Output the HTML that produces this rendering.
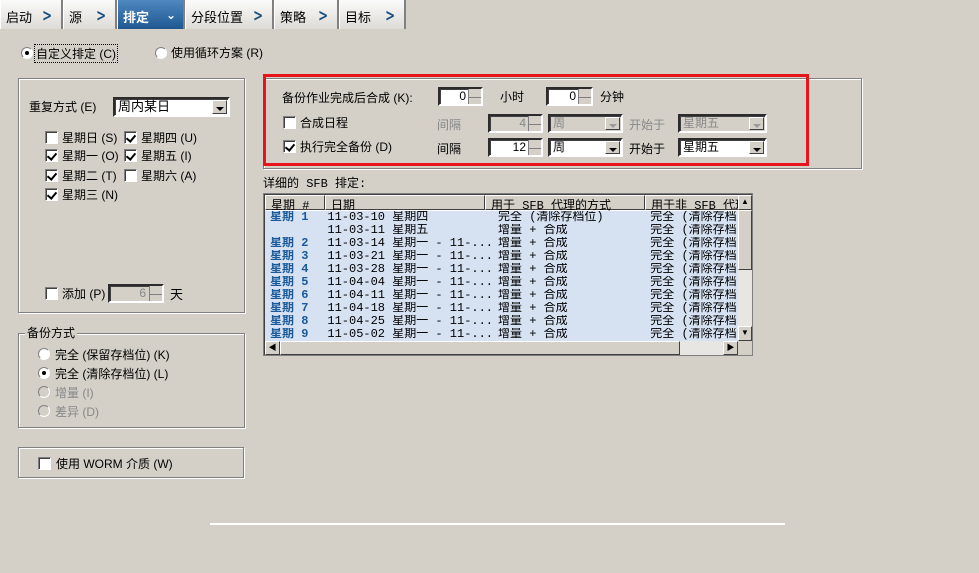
<!DOCTYPE html>
<html><head><meta charset="utf-8"><style>
*{box-sizing:border-box;margin:0;padding:0}
body{width:979px;height:573px;background:#d4d0c8;font-family:"Liberation Sans","Noto Sans CJK SC",sans-serif;font-size:12px;color:#000;position:relative;overflow:hidden}
.a{position:absolute;white-space:nowrap}
.tab{position:absolute;top:0;height:29px;background:linear-gradient(#fbfbfb,#dedbd6);border-right:2px solid #808080;border-left:1px solid #fff;font-size:13px;padding:7px 0 0 5px}
.tab .ar{position:absolute;right:7px;top:6px;color:#1a4f80;font-weight:bold;font-size:17px;font-family:"DejaVu Sans",sans-serif;transform:scaleX(0.7)}
.grp{position:absolute;border:1px solid #808080;box-shadow:1px 1px 0 #fff,inset 1px 1px 0 #fff}
.cb{position:absolute;width:13px;height:13px;background:#fff;border:1px solid #808080;border-right-color:#fff;border-bottom-color:#fff;box-shadow:inset 1px 1px 0 #404040}
.cb.on:after{content:"";position:absolute;left:3px;top:1px;width:4px;height:7px;border:solid #000;border-width:0 2px 2px 0;transform:rotate(40deg)}
.rd{position:absolute;width:12px;height:12px;border-radius:50%;background:#fff;border:1px solid #808080;border-right-color:#fff;border-bottom-color:#fff}
.rd.on:after{content:"";position:absolute;left:3px;top:3px;width:4px;height:4px;border-radius:50%;background:#000}
.fld{position:absolute;background:#fff;border:2px inset #e0e0e0;border-color:#808080 #fff #fff #808080;box-shadow:inset 1px 1px 0 #404040;font-size:12px}
.fld.dis{background:#d4d0c8;color:#888}
.sp{position:absolute;right:0;top:0;width:13px;height:100%;background:#d4d0c8;border-left:1px solid #808080}
.sp:after{content:"";position:absolute;left:0;right:0;top:50%;border-top:1px solid #808080}
.dd{position:absolute;right:1px;top:1px;bottom:1px;width:15px;background:#d4d0c8;border:1px solid;border-color:#fff #404040 #404040 #fff}
.dd:after{content:"";position:absolute;left:3px;top:6px;border:4px solid transparent;border-top:4px solid #000;border-bottom:0}
.dis .dd:after{border-top-color:#999}
.g{color:#888}
table{border-collapse:collapse;font-family:"Liberation Mono","Noto Sans CJK SC",monospace;font-size:12px}
td{height:13px;line-height:13px;padding:0 0 0 5px;white-space:nowrap;overflow:hidden}
</style></head><body>
<div class="tab" style="left:0;width:63px">启动<span class="ar">&gt;</span></div>
<div class="tab" style="left:63px;width:54px">源<span class="ar">&gt;</span></div>
<div class="tab" style="left:117px;width:68px;background:linear-gradient(#4f88c0,#1f5890);color:#fff;font-weight:bold">排定<span class="ar" style="color:#fff;transform:none;font-size:12px;top:8px">⌄</span></div>
<div class="tab" style="left:185px;width:89px">分段位置<span class="ar">&gt;</span></div>
<div class="tab" style="left:274px;width:65px">策略<span class="ar">&gt;</span></div>
<div class="tab" style="left:339px;width:67px">目标<span class="ar">&gt;</span></div>

<div class="rd on" style="left:21px;top:47px"></div><div class="a" style="left:34px;top:44px;border:1px dotted #000;padding:0 1px">自定义排定 (C)</div>
<div class="rd" style="left:155px;top:47px"></div><div class="a" style="left:171px;top:44px">使用循环方案 (R)</div>

<div class="grp" style="left:18px;top:78px;width:227px;height:235px"></div>
<div class="a" style="left:29px;top:98px">重复方式 (E)</div>
<div class="fld" style="left:113px;top:97px;width:117px;height:20px;padding-left:3px;line-height:16px;font-size:13px">周内某日<div class="dd"></div></div>
<div class="cb" style="left:45px;top:131px"></div><div class="a" style="left:62px;top:129px">星期日 (S)</div>
<div class="cb on" style="left:124px;top:131px"></div><div class="a" style="left:141px;top:129px">星期四 (U)</div>
<div class="cb on" style="left:45px;top:149px"></div><div class="a" style="left:62px;top:147px">星期一 (O)</div>
<div class="cb on" style="left:124px;top:149px"></div><div class="a" style="left:141px;top:147px">星期五 (I)</div>
<div class="cb on" style="left:45px;top:169px"></div><div class="a" style="left:62px;top:167px">星期二 (T)</div>
<div class="cb" style="left:124px;top:169px"></div><div class="a" style="left:141px;top:167px">星期六 (A)</div>
<div class="cb on" style="left:45px;top:188px"></div><div class="a" style="left:62px;top:186px">星期三 (N)</div>
<div class="cb" style="left:45px;top:287px"></div><div class="a" style="left:62px;top:285px">添加 (P)</div>
<div class="fld dis" style="left:108px;top:284px;width:56px;height:19px;text-align:right;padding-right:16px;line-height:15px">6<div class="sp"></div></div>
<div class="a" style="left:170px;top:284px;font-size:13px">天</div>

<div class="grp" style="left:18px;top:333px;width:227px;height:95px"></div>
<div class="a" style="left:25px;top:324px;background:#d4d0c8;padding:0 2px">备份方式</div>
<div class="rd" style="left:38px;top:348px"></div><div class="a" style="left:55px;top:346px">完全 (保留存档位) (K)</div>
<div class="rd on" style="left:38px;top:367px"></div><div class="a" style="left:55px;top:365px">完全 (清除存档位) (L)</div>
<div class="rd" style="left:38px;top:386px;background:#d4d0c8"></div><div class="a g" style="left:55px;top:384px">增量 (I)</div>
<div class="rd" style="left:38px;top:405px;background:#d4d0c8"></div><div class="a g" style="left:55px;top:403px">差异 (D)</div>

<div class="grp" style="left:18px;top:447px;width:226px;height:31px"></div>
<div class="cb" style="left:38px;top:457px"></div><div class="a" style="left:56px;top:455px">使用 WORM 介质 (W)</div>

<div class="grp" style="left:263px;top:78px;width:599px;height:91px"></div>
<div class="a" style="left:263px;top:74px;width:546px;height:92px;border:3px solid #e8141c"></div>
<div class="a" style="left:282px;top:89px">备份作业完成后合成 (K):</div>
<div class="fld" style="left:438px;top:87px;width:45px;height:19px;text-align:right;padding-right:15px;line-height:15px">0<div class="sp"></div></div>
<div class="a" style="left:500px;top:88px">小时</div>
<div class="fld" style="left:546px;top:87px;width:47px;height:19px;text-align:right;padding-right:15px;line-height:15px">0<div class="sp"></div></div>
<div class="a" style="left:600px;top:88px">分钟</div>
<div class="cb" style="left:283px;top:116px"></div><div class="a" style="left:300px;top:114px">合成日程</div>
<div class="a g" style="left:437px;top:116px">间隔</div>
<div class="fld dis" style="left:488px;top:114px;width:55px;height:19px;text-align:right;padding-right:15px;line-height:15px">4<div class="sp"></div></div>
<div class="fld dis" style="left:548px;top:114px;width:75px;height:19px;padding-left:3px;line-height:15px">周<div class="dd"></div></div>
<div class="a g" style="left:629px;top:116px">开始于</div>
<div class="fld dis" style="left:678px;top:114px;width:89px;height:19px;padding-left:3px;line-height:15px">星期五<div class="dd"></div></div>
<div class="cb on" style="left:283px;top:140px"></div><div class="a" style="left:300px;top:138px">执行完全备份 (D)</div>
<div class="a" style="left:437px;top:140px">间隔</div>
<div class="fld" style="left:488px;top:138px;width:55px;height:19px;text-align:right;padding-right:15px;line-height:15px">12<div class="sp"></div></div>
<div class="fld" style="left:548px;top:138px;width:75px;height:19px;padding-left:3px;line-height:15px">周<div class="dd"></div></div>
<div class="a" style="left:629px;top:140px">开始于</div>
<div class="fld" style="left:678px;top:138px;width:89px;height:19px;padding-left:3px;line-height:15px">星期五<div class="dd"></div></div>

<div class="a" style="left:263px;top:174px;font-family:'Liberation Mono','Noto Sans CJK SC',monospace">详细的 SFB 排定:</div>
<div class="a" style="left:263px;top:193px;width:490px;height:163px;border:1px solid #808080;background:#fff;box-shadow:inset 1px 1px 0 #404040;overflow:hidden">
 <div class="a" style="left:1px;top:1px;width:473px;height:15px;background:#d4d0c8;font-family:'Liberation Mono','Noto Sans CJK SC',monospace">
  <div class="a" style="left:0;width:60px;height:15px;border:1px solid;border-color:#fff #404040 #404040 #fff;padding-left:5px">星期 #</div>
  <div class="a" style="left:60px;width:160px;height:15px;border:1px solid;border-color:#fff #404040 #404040 #fff;padding-left:5px">日期</div>
  <div class="a" style="left:220px;width:160px;height:15px;border:1px solid;border-color:#fff #404040 #404040 #fff;padding-left:5px">用于 SFB 代理的方式</div>
  <div class="a" style="left:380px;width:100px;height:15px;border:1px solid;border-color:#fff #404040 #404040 #fff;padding-left:5px;overflow:hidden">用于非 SFB 代理</div>
 </div>
 <table class="a" style="left:1px;top:17px;width:473px;background:#d6e2f2">
 <colgroup><col style="width:60px"><col style="width:160px"><col style="width:160px"><col style="width:93px"></colgroup>
 <tr><td style="color:#1a5a9a;font-weight:bold">星期 1</td><td>11-03-10 星期四</td><td>完全 (清除存档位)</td><td>完全 (清除存档</td></tr>
 <tr><td></td><td>11-03-11 星期五</td><td>增量 + 合成</td><td>完全 (清除存档</td></tr>
 <tr><td style="color:#1a5a9a;font-weight:bold">星期 2</td><td>11-03-14 星期一 - 11-...</td><td>增量 + 合成</td><td>完全 (清除存档</td></tr>
 <tr><td style="color:#1a5a9a;font-weight:bold">星期 3</td><td>11-03-21 星期一 - 11-...</td><td>增量 + 合成</td><td>完全 (清除存档</td></tr>
 <tr><td style="color:#1a5a9a;font-weight:bold">星期 4</td><td>11-03-28 星期一 - 11-...</td><td>增量 + 合成</td><td>完全 (清除存档</td></tr>
 <tr><td style="color:#1a5a9a;font-weight:bold">星期 5</td><td>11-04-04 星期一 - 11-...</td><td>增量 + 合成</td><td>完全 (清除存档</td></tr>
 <tr><td style="color:#1a5a9a;font-weight:bold">星期 6</td><td>11-04-11 星期一 - 11-...</td><td>增量 + 合成</td><td>完全 (清除存档</td></tr>
 <tr><td style="color:#1a5a9a;font-weight:bold">星期 7</td><td>11-04-18 星期一 - 11-...</td><td>增量 + 合成</td><td>完全 (清除存档</td></tr>
 <tr><td style="color:#1a5a9a;font-weight:bold">星期 8</td><td>11-04-25 星期一 - 11-...</td><td>增量 + 合成</td><td>完全 (清除存档</td></tr>
 <tr><td style="color:#1a5a9a;font-weight:bold">星期 9</td><td>11-05-02 星期一 - 11-...</td><td>增量 + 合成</td><td>完全 (清除存档</td></tr>
 </table>
 <div class="a" style="left:474px;top:1px;width:14px;height:146px;background:#e8e6e2">
  <div class="a" style="left:0;top:0;width:14px;height:15px;background:#d4d0c8;border:1px solid;border-color:#fff #404040 #404040 #fff;font-size:8px;text-align:center;line-height:12px">▲</div>
  <div class="a" style="left:0;top:15px;width:14px;height:60px;background:#d4d0c8;border:1px solid;border-color:#fff #404040 #404040 #fff"></div>
  <div class="a" style="left:0;top:131px;width:14px;height:15px;background:#d4d0c8;border:1px solid;border-color:#fff #404040 #404040 #fff;font-size:8px;text-align:center;line-height:12px">▼</div>
 </div>
 <div class="a" style="left:1px;top:147px;width:473px;height:14px;background:#e8e6e2">
  <div class="a" style="left:0;top:0;width:15px;height:14px;background:#d4d0c8;border:1px solid;border-color:#fff #404040 #404040 #fff;font-size:8px;text-align:center;line-height:12px">◀</div>
  <div class="a" style="left:15px;top:0;width:400px;height:14px;background:#d4d0c8;border:1px solid;border-color:#fff #404040 #404040 #fff"></div>
  <div class="a" style="left:458px;top:0;width:15px;height:14px;background:#d4d0c8;border:1px solid;border-color:#fff #404040 #404040 #fff;font-size:8px;text-align:center;line-height:12px">▶</div>
 </div>
 <div class="a" style="left:474px;top:147px;width:14px;height:14px;background:#d4d0c8"></div>
</div>

<div class="a" style="left:210px;top:523px;width:575px;height:2px;background:#fff"></div>
</body></html>
